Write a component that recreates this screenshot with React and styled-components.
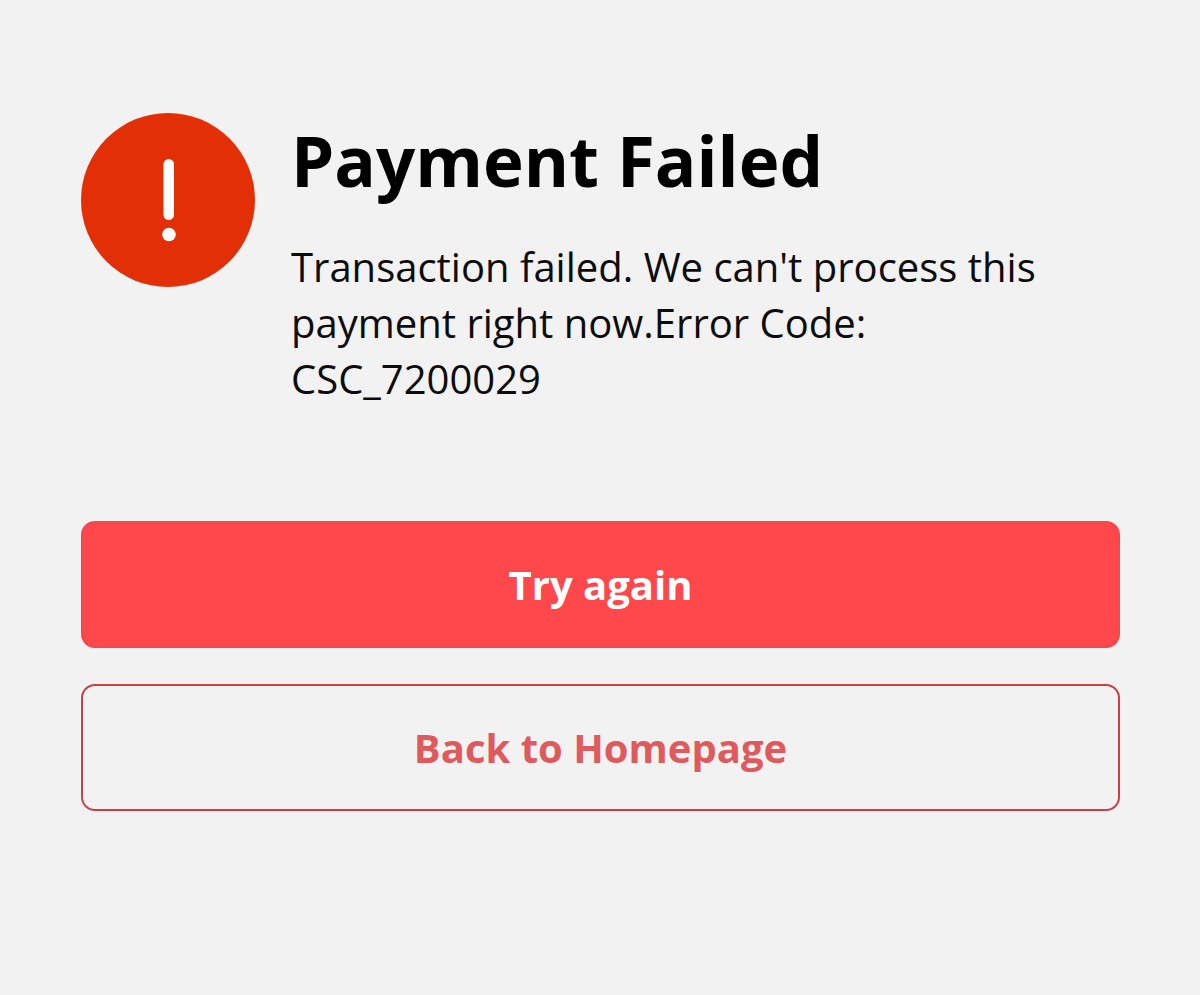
import React from "react";
import styled, { createGlobalStyle } from "styled-components";

const GlobalStyles = createGlobalStyle`
    * {
        box-sizing: border-box;
    }
    body {
        margin: 0;
        background-color: #f2f2f2;
        font-family: "Open Sans", "Noto Sans", sans-serif;
    }
`;

const Page = styled.main`
    padding: 112px 80px 112px 81px;
`;

const Message = styled.section`
    display: flex;
    align-items: flex-start;
    gap: 36px;
`;

const AlertIcon = styled.svg`
    flex: none;
    width: 174px;
    height: 176px;
`;

const Title = styled.h1`
    margin: 0 0 30px;
    color: #000;
    font-size: 69px;
    font-weight: 700;
    line-height: 97px;
`;

const Text = styled.p`
    margin: 0;
    color: #0c0c0c;
    font-size: 40px;
    line-height: 56px;
`;

const Actions = styled.div`
    display: grid;
    gap: 36px;
    margin-top: 114px;
`;

const Button = styled.button`
    width: 100%;
    padding: 32px;
    border: 2px solid ${(props) => (props.$outlined ? "#c94147" : "#f5464b")};
    border-radius: 14px;
    background-color: ${(props) => (props.$outlined ? "transparent" : "#ff484b")};
    color: ${(props) => (props.$outlined ? "#df5a5c" : "#fff")};
    font-family: inherit;
    font-size: 40px;
    font-weight: 700;
    line-height: 59px;
    cursor: pointer;
`;

function App() {
    return (
        <>
            <GlobalStyles />
            <Page>
                <Message>
                    <AlertIcon viewBox="0 0 174 176" aria-hidden="true">
                        <circle cx="87" cy="88" r="87" fill="#e32f05" />
                        <rect x="82.5" y="47" width="10.5" height="61" rx="5.25" fill="#fff" />
                        <circle cx="88" cy="122.5" r="6.8" fill="#fff" />
                    </AlertIcon>
                    <div>
                        <Title>Payment Failed</Title>
                        <Text>
                            Transaction failed. We can't process this payment right now.Error Code: CSC_7200029
                        </Text>
                    </div>
                </Message>
                <Actions>
                    <Button type="button">Try again</Button>
                    <Button type="button" $outlined>Back to Homepage</Button>
                </Actions>
            </Page>
        </>
    );
}

export default App;
